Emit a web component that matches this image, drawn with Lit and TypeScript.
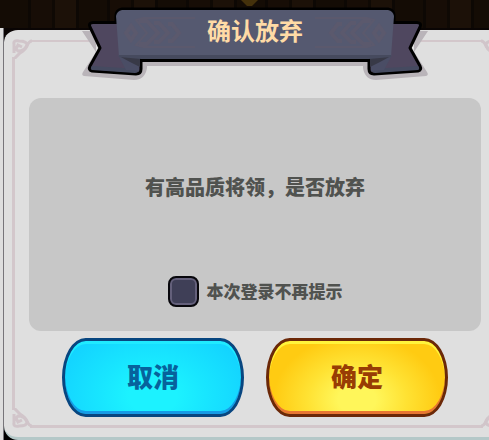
import { LitElement, html, svg, css } from "lit";
import { customElement, state } from "lit/decorators.js";

const tail = svg`
  <path d="M126 22.500H93Q88 23 90 27L100 48L90 66Q88 70 92 71L136 74Q141 74 141 69V56H126Z"
    fill="#4f475f" stroke="#000" stroke-width="3" stroke-linejoin="round"/>
  <path d="M92 66L139 69Q139 72 135 73L92 70Q90 69 92 66Z" fill="#454a60"/>
  <path d="M118 55H139V71L126 70Z" fill="#4a4d65"/>
  <path d="M119 56H140V67L130 62Z" fill="#383947"/>`;

const tailShadow = svg`
  <path d="M82 31H96V55H147V68Q145 80 134 80L84 76Q81 75 83 72L96 52Z" fill="#b9b4b9"/>`;

const chevrons = svg`
  <g fill="none" stroke="#5b596d" stroke-width="4">
    <path d="M126 33L131 26L136 33L131 40Z"/>
    <path d="M195 18H143L136 20L147 33L136 45L143 47H195" stroke-width="2"/>
    <path d="M139 21H147L158 33L147 44H139"/>
    <path d="M154 23H159L168 33L159 42H154"/>
    <path d="M168 24H172L179 33L172 41H168"/>
  </g>`;

const mirror = "translate(510 0) scale(-1 1)";

@customElement("title-ribbon")
export class TitleRibbon extends LitElement {
  static styles = css`
    :host {
      display: grid;
      place-items: start center;
    }
    svg,
    .title {
      grid-area: 1 / 1;
    }
    svg {
      display: block;
      width: 350px;
      height: 84px;
    }
    .title {
      z-index: 1;
      padding-top: 14px;
    }
  `;

  render() {
    return html`
      <svg viewBox="80 0 350 84" aria-hidden="true">
        <path d="M241 0H258L252 6H247Z" fill="#44310b"/>
        <path d="M140 61H370V66H140Z" fill="#b9b4b9"/>
        ${tailShadow}<g transform=${mirror}>${tailShadow}</g>
        <path d="M122 9H388Q394 10 394 16V40L391 59H119L116 40V16Q116 10 122 9Z"
          fill="#000" stroke="#000" stroke-width="3"/>
        ${tail}<g transform=${mirror}>${tail}</g>
        <path d="M122 10H388Q393 11 394 16L391 57H119L116 16Q117 11 122 10Z" fill="#555970"/>
        <path d="M119 55H391V57L369 59H141L119 57Z" fill="#464a5e"/>
        <path d="M142 60.500H368" stroke="#000" stroke-width="3"/>
        ${chevrons}<g transform=${mirror}>${chevrons}</g>
      </svg>
      <div class="title"><slot></slot></div>
    `;
  }
}

const knot = svg`
  <g fill="none" stroke="#d1c5ca" stroke-width="3">
    <path d="M2 14V5Q1 1 7 2Q15 2 15 6Q13 12 6 12L4 10L6 6L10 8"/>
    <path d="M20 2Q17 2 15 7Q13 11 8 14L2 20"/>
  </g>`;

@customElement("app-root")
export class AppRoot extends LitElement {
  @state() private muted = false;

  static styles = css`
    :host {
      display: grid;
      grid-template-columns: 4px minmax(0, 1fr);
      min-height: 100vh;
      box-sizing: border-box;
      padding-top: 28px;
      overflow: hidden;
      background: repeating-linear-gradient(
        90deg,
        #140c05 0 28px,
        #0d0804 28px 31px,
        #170d06 31px 52px,
        #0f0904 52px 55px,
        #1c1108 55px 76px,
        #0d0804 76px 79px
      );
      font-family: "Noto Sans CJK SC", "Noto Sans", sans-serif;
      font-weight: 900;
    }
    .neighbour {
      border-right: 1px solid #77757a;
      background: #dedede;
    }
    .backdrop {
      display: grid;
      background: linear-gradient(#0a0504, #000);
    }
    .panel {
      position: relative;
      display: flex;
      flex-direction: column;
      margin-right: -20px;
      padding: 0 28px 20px 25px;
      border-top: 2px solid #0a0504;
      border-bottom: 3px solid #b4c8c8;
      border-radius: 14px;
      background: #dfdfdf;
    }
    .frame {
      position: absolute;
      inset: 9px 8px 9px 8px;
    }
    .knot {
      position: absolute;
      width: 20px;
      height: 20px;
    }
    .tl { top: 0; left: 0; }
    .tr { top: 0; right: 0; transform: scaleX(-1); }
    .bl { bottom: 0; left: 0; transform: scaleY(-1); }
    .br { bottom: 0; right: 0; transform: scale(-1); }
    .rule {
      position: absolute;
      background: #d3c7cb;
    }
    .rule.top { top: 1px; left: 18px; right: 18px; height: 2px; }
    .rule.bottom { bottom: 0; left: 18px; right: 18px; height: 3px; }
    .rule.left { left: 0; top: 18px; bottom: 18px; width: 3px; }
    title-ribbon {
      position: relative;
      margin-top: -30px;
    }
    h1 {
      margin: 0;
      font-size: 24px;
      line-height: 32px;
      color: #ffdba6;
    }
    .content {
      position: relative;
      display: flex;
      flex-direction: column;
      align-items: center;
      gap: 73px;
      margin-top: 14px;
      padding: 73px 16px 24px;
      border-radius: 12px;
      background: #c7c7c7;
      color: #50524f;
    }
    .message {
      margin: 0;
      font-size: 20px;
      line-height: 32px;
    }
    .option {
      display: flex;
      align-items: center;
      gap: 8px;
      font-size: 17px;
      line-height: 28px;
    }
    .caption {
      padding-bottom: 2px;
    }
    .option input {
      appearance: none;
      display: grid;
      place-items: center;
      width: 31px;
      height: 31px;
      margin: 0;
      border: 2px solid #08070c;
      border-radius: 8px;
      background: #3f3f57;
      box-shadow: inset 0 0 0 2px #64607b;
    }
    .option input:checked::before {
      content: "✓";
      color: #ffdba6;
    }
    .actions {
      position: relative;
      display: grid;
      grid-template-columns: repeat(2, minmax(0, 182px));
      justify-content: center;
      gap: 22px;
      margin-top: 7px;
    }
    button {
      height: 79px;
      padding: 0 0 4px;
      border: 3px solid;
      border-radius: 24px / 40px;
      font: inherit;
      font-size: 26px;
      line-height: 36px;
      cursor: pointer;
    }
    .cancel {
      border-color: #084680;
      background: radial-gradient(ellipse 80px 60px at 50% 75%, #1cf2ff 30%, #18e6ff 65%, #12ceff 140%);
      box-shadow: inset 0 3px 0 #20eaff, inset 0 -3px 0 #169be6;
      color: #07629c;
    }
    .confirm {
      border-color: #6b2808;
      background: radial-gradient(ellipse 76px 58px at 50% 80%, #fff65a 25%, #ffe233 65%, #ffcb12 110%);
      box-shadow: inset 0 3px 0 #fff43c, inset 0 -3px 0 #e87632;
      color: #983d04;
    }
  `;

  private toggle(e: Event) {
    this.muted = (e.target as HTMLInputElement).checked;
  }

  render() {
    return html`
      <div class="neighbour"></div>
      <div class="backdrop">
        <section class="panel" role="dialog" aria-labelledby="title">
          <div class="frame" aria-hidden="true">
            <span class="rule top"></span>
            <span class="rule bottom"></span>
            <span class="rule left"></span>
            ${["tl", "tr", "bl", "br"].map(
              (corner) => html`<svg class="knot ${corner}" viewBox="0 0 20 20">${knot}</svg>`
            )}
          </div>
          <title-ribbon><h1 id="title">确认放弃</h1></title-ribbon>
          <div class="content">
            <p class="message">有高品质将领，是否放弃</p>
            <label class="option">
              <input type="checkbox" .checked=${this.muted} @change=${this.toggle} />
              <span class="caption">本次登录不再提示</span>
            </label>
          </div>
          <div class="actions">
            <button class="cancel" type="button">取消</button>
            <button class="confirm" type="button">确定</button>
          </div>
        </section>
      </div>
    `;
  }
}
